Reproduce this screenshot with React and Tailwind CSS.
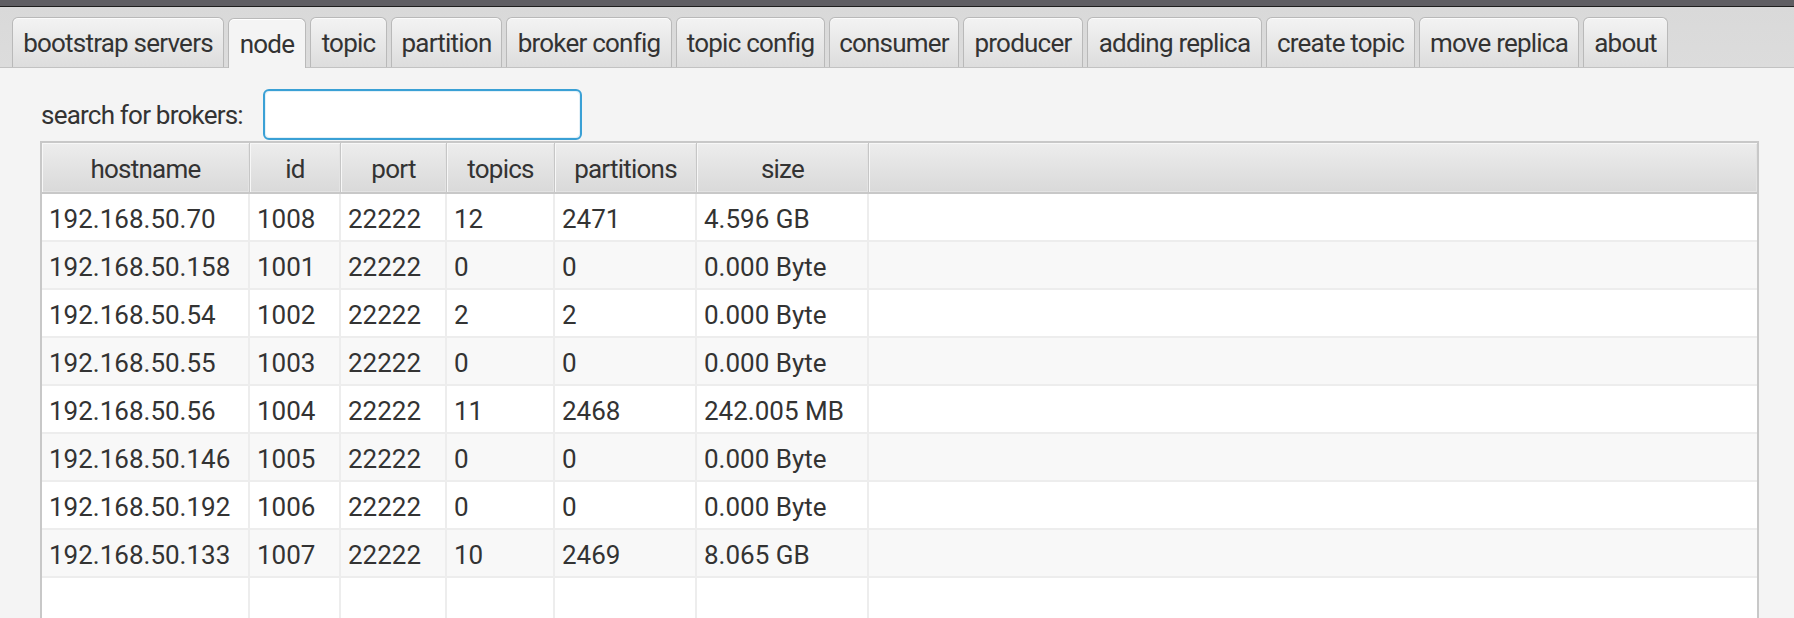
import React from 'react'

const tabs = [
  { label: 'bootstrap servers', w: 'w-[212px]' },
  { label: 'node', w: 'w-[78px]', active: true },
  { label: 'topic', w: 'w-[77px]' },
  { label: 'partition', w: 'w-[111px]' },
  { label: 'broker config', w: 'w-[166px]' },
  { label: 'topic config', w: 'w-[149px]' },
  { label: 'consumer', w: 'w-[130px]' },
  { label: 'producer', w: 'w-[120px]' },
  { label: 'adding replica', w: 'w-[175px]' },
  { label: 'create topic', w: 'w-[149px]' },
  { label: 'move replica', w: 'w-[160px]' },
  { label: 'about', w: 'w-[85px]' },
]

const columns = [
  { label: 'hostname', w: 'w-[208px]' },
  { label: 'id', w: 'w-[91px]' },
  { label: 'port', w: 'w-[106px]' },
  { label: 'topics', w: 'w-[108px]' },
  { label: 'partitions', w: 'w-[142px]' },
  { label: 'size', w: 'w-[172px]' },
]

const brokers = [
  ['192.168.50.70', '1008', '22222', '12', '2471', '4.596 GB'],
  ['192.168.50.158', '1001', '22222', '0', '0', '0.000 Byte'],
  ['192.168.50.54', '1002', '22222', '2', '2', '0.000 Byte'],
  ['192.168.50.55', '1003', '22222', '0', '0', '0.000 Byte'],
  ['192.168.50.56', '1004', '22222', '11', '2468', '242.005 MB'],
  ['192.168.50.146', '1005', '22222', '0', '0', '0.000 Byte'],
  ['192.168.50.192', '1006', '22222', '0', '0', '0.000 Byte'],
  ['192.168.50.133', '1007', '22222', '10', '2469', '8.065 GB'],
  null,
]

const Tab = ({ label, w, active }) => (
  <div
    className={`${w} h-[50px] shrink-0 flex items-center justify-center rounded-t-[6px] border border-b-0 border-[#b9b9b9] ${
      active
        ? 'bg-[#f4f4f4] relative top-px shadow-[inset_0_1px_0_#ffffff]'
        : 'bg-gradient-to-b from-[#f3f3f3] to-[#dddddd] shadow-[inset_0_1px_0_#fbfbfb]'
    }`}
  >
    <span className="whitespace-nowrap text-[26px] leading-none tracking-[-0.03em] text-[#333333]">{label}</span>
  </div>
)

const App = () => {
  return (
    <div className="w-[1794px] h-[618px] overflow-hidden bg-[#f4f4f4] font-['Roboto','Liberation_Sans',sans-serif]">
      <div className="h-[6px] bg-[#5f5e63]" />
      <div className="h-px bg-[#1e1e1e]" />

      <div className="h-[61px] bg-gradient-to-b from-[#d9d9d9] to-[#dcdcdc] border-b border-[#c2c2c2] flex items-end gap-[4px] pl-[12px]">
        {tabs.map((t) => (
          <Tab key={t.label} {...t} />
        ))}
      </div>

      <div className="pt-[21px]">
        <div className="flex items-center h-[51px] pl-[41px] gap-[20px]">
          <span className="whitespace-nowrap text-[26px] leading-none tracking-[-0.03em] text-[#333333]">search for brokers:</span>
          <div className="w-[319px] h-[51px] rounded-[6px] border-2 border-[#3aa0d5] bg-[#e4f1f8] p-px">
            <div className="w-full h-full rounded-[4px] bg-white" />
          </div>
        </div>

        <div className="ml-[40px] mt-px w-[1719px] border-2 border-[#c8c8c8] bg-white">
          <div className="flex h-[51px] border-b-2 border-[#c8c8c8]">
            {columns.map((c) => (
              <div
                key={c.label}
                className={`${c.w} shrink-0 flex items-center justify-center pt-[3px] border-r border-[#c6c6c6] bg-gradient-to-b from-[#ededed] to-[#d9d9d9] shadow-[inset_1px_1px_0_#f7f7f7,inset_-1px_-1px_0_#e3e3e3]`}
              >
                <span className="whitespace-nowrap text-[26px] leading-none tracking-[-0.03em] text-[#333333]">{c.label}</span>
              </div>
            ))}
            <div className="flex-1 bg-gradient-to-b from-[#ededed] to-[#d9d9d9] shadow-[inset_1px_1px_0_#f7f7f7,inset_-1px_-1px_0_#e3e3e3]" />
          </div>

          {brokers.map((row, i) => (
            <div
              key={i}
              className={`flex h-[48px] border-b-2 border-[#ededed] ${i % 2 === 1 ? 'bg-[#f8f8f8]' : 'bg-white'}`}
            >
              {columns.map((c, j) => (
                <div
                  key={c.label}
                  className={`${c.w} shrink-0 flex items-center pl-[7px] pt-[3px] border-r-2 border-[#ededed]`}
                >
                  <span className="whitespace-nowrap text-[26px] leading-none text-[#333333]">{row ? row[j] : ''}</span>
                </div>
              ))}
              <div className="flex-1" />
            </div>
          ))}
        </div>
      </div>
    </div>
  )
}

export default App
